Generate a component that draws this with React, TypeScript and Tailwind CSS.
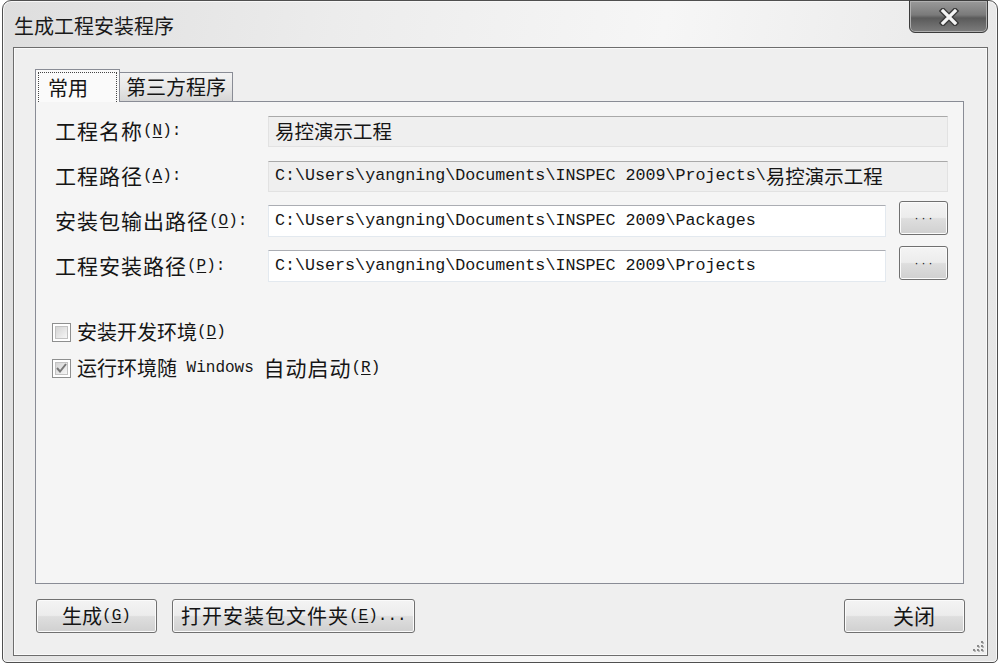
import React from 'react';

const CJK = "'Noto Sans CJK SC', 'Noto Sans', sans-serif";

// splits a string in CJK runs and latin runs, latin drawn in a mono face like SimSun's
const Mixed = ({ text, big }: { text: string; big: string }) => {
  const parts = text.split(/([\u2E80-\u9FFF\uFF00-\uFFEF]+)/).filter(Boolean);
  return (
    <>
      {parts.map((p, i) =>
        /[\u2E80-\u9FFF\uFF00-\uFFEF]/.test(p) ? (
          <span key={i} className={big}>{p}</span>
        ) : (
          <span key={i} className="font-['Liberation_Mono',monospace] text-[16.7px] whitespace-pre">{p}</span>
        )
      )}
    </>
  );
};

const Key = ({ k, tail = '' }: { k: string; tail?: string }) => (
  <span className="font-['Liberation_Mono',monospace] text-[16px] whitespace-pre">
    (<span className="underline underline-offset-2">{k}</span>){tail}
  </span>
);

const btn =
  'h-[34px] rounded-[3px] border border-[#707070] bg-[linear-gradient(#f4f4f4_0%,#ececec_48%,#dedede_52%,#d0d0d0_100%)] shadow-[inset_0_0_0_1px_#fbfbfb] flex items-center justify-center text-[#151515]';

const ReadField = ({ value }: { value: string }) => (
  <div className="flex-1 h-[31px] border border-[#e2e2e2] border-t-[#a9a9a9] bg-[#efefef] flex items-center pl-[6px] text-[#151515]">
    <Mixed text={value} big="text-[19.5px]" />
  </div>
);

const EditField = ({ value }: { value: string }) => (
  <div className="flex items-center flex-1 gap-[13px]">
    <div className="flex-1 h-[32px] border border-[#e3e9ef] border-t-[#abadb3] bg-white flex items-center pl-[6px] text-[#151515]">
      <Mixed text={value} big="text-[19.5px]" />
    </div>
    <button className={btn + ' w-[49px] -mt-[6px] text-[#9a9a9a] text-[12px] tracking-[3px] pl-[3px] font-["Liberation_Sans",sans-serif]'}>
      ···
    </button>
  </div>
);

const Row = ({ label, k, children }: { label: string; k: string; children: React.ReactNode }) => (
  <div className="flex items-center h-[32px]">
    <div className="w-[213px] text-[#151515] flex items-center">
      <span className="text-[21px] tracking-[1px]">{label}</span>
      <Key k={k} tail=":" />
    </div>
    {children}
  </div>
);

const Check = ({ checked }: { checked?: boolean }) => (
  <div className="w-[19px] h-[19px] border border-[#8e8f8f] bg-white p-[2px]">
    <div className="w-full h-full bg-[linear-gradient(135deg,#d4d4d4,#f6f6f6)] border border-[#c2c2c2] flex items-center justify-center">
      {checked && (
        <svg width="11" height="10" viewBox="0 0 11 10">
          <path d="M1 5 L4 8.5 L10 1" fill="none" stroke="#777" strokeWidth="2" />
        </svg>
      )}
    </div>
  </div>
);

export default function App() {
  return (
    <div className="w-[1000px] h-[665px] bg-white px-[2px] pb-[2px]" style={{ fontFamily: CJK }}>
      <div className="relative h-full rounded-t-[9px] rounded-b-[5px] border border-[#4f4f4f] bg-[linear-gradient(100deg,#dedede_0%,#ececec_30%,#f6f6f6_60%,#e4e4e4_100%)] shadow-[inset_0_0_0_1px_#f7f7f7] flex flex-col">
        {/* title bar */}
        <div className="h-[46px] flex justify-between">
          <div className="self-center pl-[11px] mt-[4px] text-[20px] text-[#1a1a1a]">生成工程安装程序</div>
          <div className="mr-[9px] -mt-px w-[79px] h-[33px] rounded-b-[6px] border border-[#3c3c3c] bg-[linear-gradient(#9a9a9a_0%,#7a7a7a_45%,#5a5a5a_55%,#7d7d7d_100%)] shadow-[inset_0_0_0_1px_#b0b0b0] flex items-center justify-center">
            <svg width="20" height="18" viewBox="0 0 20 18">
              <path d="M4 3 L16 15 M16 3 L4 15" stroke="#3a3a3a" strokeWidth="6" strokeLinecap="square" />
              <path d="M4 3 L16 15 M16 3 L4 15" stroke="#f4f4f4" strokeWidth="3.2" strokeLinecap="square" />
            </svg>
          </div>
        </div>

        {/* client area */}
        <div className="flex-1 ml-[10px] mr-[9px] mb-[6px] border border-[#6d6d6d] bg-[#efefef] shadow-[inset_0_0_0_1px_#fafafa] flex flex-col pt-[21px] pl-[21px] pr-[23px] pb-[22px] relative">
          {/* tabs */}
          <div className="flex items-end h-[33px] -mb-px relative z-10">
            <div className="w-[85px] h-[33px] border border-[#898c95] border-b-0 bg-[#fafafa] p-[2px] pb-0">
              <div className="h-full border border-dotted border-[#444] border-b-0 flex items-center pl-[9px] text-[20px] text-[#151515]">
                常用
              </div>
            </div>
            <div className="w-[113px] h-[30px] border border-[#898c95] border-l-0 bg-[linear-gradient(#f3f3f3_0%,#e8e8e8_50%,#d6d6d6_100%)] flex items-center pl-[6px] text-[20px] text-[#151515]">
              第三方程序
            </div>
          </div>

          {/* panel */}
          <div className="flex-1 border border-[#898c95] bg-[#f5f5f5] pt-[13px] pl-[19px] pr-[15px] flex flex-col">
            <div className="flex flex-col gap-[13px]">
              <Row label="工程名称" k="N">
                <ReadField value="易控演示工程" />
              </Row>
              <Row label="工程路径" k="A">
                <ReadField value="C:\Users\yangning\Documents\INSPEC 2009\Projects\易控演示工程" />
              </Row>
              <Row label="安装包输出路径" k="O">
                <EditField value="C:\Users\yangning\Documents\INSPEC 2009\Packages" />
              </Row>
              <Row label="工程安装路径" k="P">
                <EditField value="C:\Users\yangning\Documents\INSPEC 2009\Projects" />
              </Row>
            </div>

            <div className="mt-[38px] flex flex-col gap-[12px] text-[#151515]">
              <div className="flex items-center h-[24px] gap-[6px] -ml-[3px]">
                <Check />
                <span className="flex items-center">
                  <span className="text-[20px]">安装开发环境</span>
                  <Key k="D" />
                </span>
              </div>
              <div className="flex items-center h-[24px] gap-[6px] -ml-[3px]">
                <Check checked />
                <span className="flex items-center">
                  <span className="text-[20px]">运行环境随</span>
                  <span className="font-['Liberation_Mono',monospace] text-[16px] whitespace-pre"> Windows </span>
                  <span className="text-[21px] tracking-[1px]">自动启动</span>
                  <Key k="R" />
                </span>
              </div>
            </div>
          </div>

          {/* bottom buttons */}
          <div className="mt-[15px] flex items-center">
            <button className={btn + ' w-[121px] ml-px'}>
              <span className="text-[20px]">生成</span>
              <Key k="G" />
            </button>
            <button className={btn + ' w-[243px] ml-[15px] justify-start pl-[8px]'}>
              <span className="text-[20px] tracking-[1px]">打开安装包文件夹</span>
              <Key k="E" tail="..." />
            </button>
            <div className="flex-1" />
            <button className={btn + ' w-[121px] -mr-[1px] justify-end pr-[29px]'}>
              <span className="text-[21px]">关闭</span>
            </button>
          </div>

          {/* size grip */}
          <svg className="absolute right-[2px] bottom-[2px]" width="14" height="14" viewBox="0 0 14 14">
            {[[11, 3], [11, 7], [7, 7], [11, 11], [7, 11], [3, 11]].map(([x, y], i) => (
              <g key={i}>
                <rect x={x} y={y} width="2" height="2" fill="#b8b8b8" />
                <rect x={x - 1} y={y - 1} width="2" height="2" fill="#8a8a8a" />
              </g>
            ))}
          </svg>
        </div>
      </div>
    </div>
  );
}
